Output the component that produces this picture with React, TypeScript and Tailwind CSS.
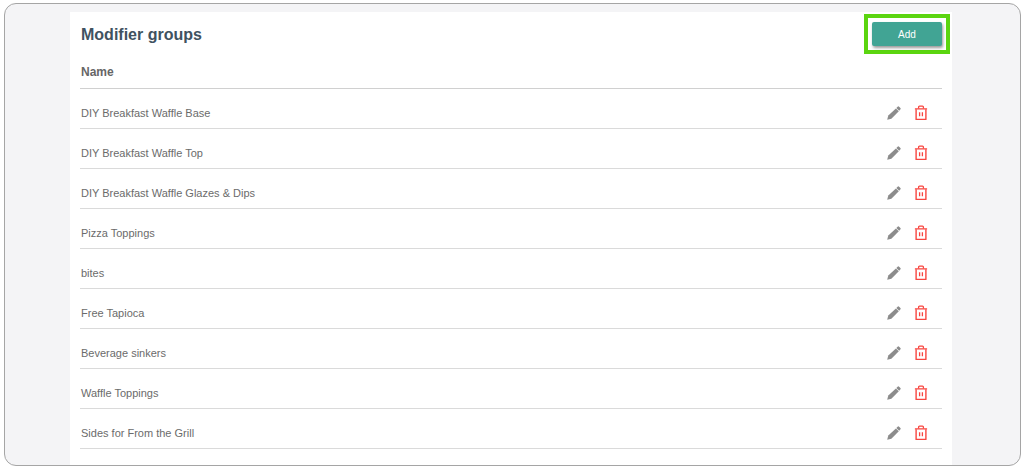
interface ModifierGroup {
  id: number
  name: string
}

const modifierGroups: ModifierGroup[] = [
  { id: 1, name: "DIY Breakfast Waffle Base" },
  { id: 2, name: "DIY Breakfast Waffle Top" },
  { id: 3, name: "DIY Breakfast Waffle Glazes & Dips" },
  { id: 4, name: "Pizza Toppings" },
  { id: 5, name: "bites" },
  { id: 6, name: "Free Tapioca" },
  { id: 7, name: "Beverage sinkers" },
  { id: 8, name: "Waffle Toppings" },
  { id: 9, name: "Sides for From the Grill" },
]

function PencilIcon() {
  return (
    <svg viewBox="0 0 14 14" className="block size-3.5" fill="#8c8c8c" aria-hidden="true">
      <path d="M0.2 13.8 1.3 9.6 8.9 2.4 11.8 5.3 4.4 12.7Z" />
      <path d="M9.3 2 10.9 0.6Q11.5 0.1 12.1 0.7L13.4 2Q14 2.6 13.5 3.2L12.2 4.8Z" />
    </svg>
  )
}

function TrashIcon() {
  return (
    <svg viewBox="0 0 14 16" className="block h-4 w-3.5" fill="none" stroke="#f8453f" aria-hidden="true">
      <path d="M0.9 3.9H13.1" strokeWidth="1.4" />
      <path d="M4.6 3.6V2.1Q4.6 1.2 5.5 1.2H8.5Q9.4 1.2 9.4 2.1V3.6" strokeWidth="1.3" />
      <path d="M2.1 4.2V14.4H11.9V4.2" strokeWidth="1.4" strokeLinejoin="round" />
      <path d="M5.6 7.2V11.2M8.4 7.2V11.2" strokeWidth="1.3" />
    </svg>
  )
}

function GroupRow({ group }: { group: ModifierGroup }) {
  return (
    <tr className="h-10 border-b border-[#dadada]">
      <td className="pt-2 pl-px text-[11px] leading-4 text-[#6b6b6b]">{group.name}</td>
      <td className="w-20 pt-2 pr-3.5">
        <div className="flex items-center justify-end gap-[13px]">
          <button type="button" aria-label={`Edit ${group.name}`} className="cursor-pointer">
            <PencilIcon />
          </button>
          <button type="button" aria-label={`Delete ${group.name}`} className="cursor-pointer">
            <TrashIcon />
          </button>
        </div>
      </td>
    </tr>
  )
}

export default function App() {
  return (
    <div className="flex min-h-screen bg-white pt-[3px] pr-[3px] pb-0.5 pl-1 font-['Liberation_Sans',Arial,sans-serif]">
      <div className="flex grow overflow-hidden rounded-xl border border-[#a5a5a5] bg-[#f4f4f6] pt-2 pr-[68px] pl-[65px]">
        <main className="grow bg-white px-2.5 pt-0.5">
          <div className="flex items-start justify-between">
            <h1 className="pt-2 pl-px text-base leading-[26px] font-bold text-[#40525f]">Modifier groups</h1>
            {/* Highlighted action */}
            <div className="-mr-2 border-4 border-[#5bd510] p-1">
              <button
                type="button"
                className="block h-6 w-[70px] cursor-pointer rounded-xs bg-[#41a494] text-[10px] text-white shadow-[1px_2px_3px_rgba(0,0,0,0.4)]"
              >
                Add
              </button>
            </div>
          </div>

          <table className="mt-2.5 w-full border-collapse">
            <thead>
              <tr className="border-b border-[#d0d0d0]">
                <th scope="col" className="h-6 pb-2 pl-px text-left text-xs leading-4 font-bold text-[#666666]">
                  Name
                </th>
                <td className="w-20"></td>
              </tr>
            </thead>
            <tbody>
              {modifierGroups.map((group) => (
                <GroupRow key={group.id} group={group} />
              ))}
            </tbody>
          </table>
        </main>
      </div>
    </div>
  )
}
